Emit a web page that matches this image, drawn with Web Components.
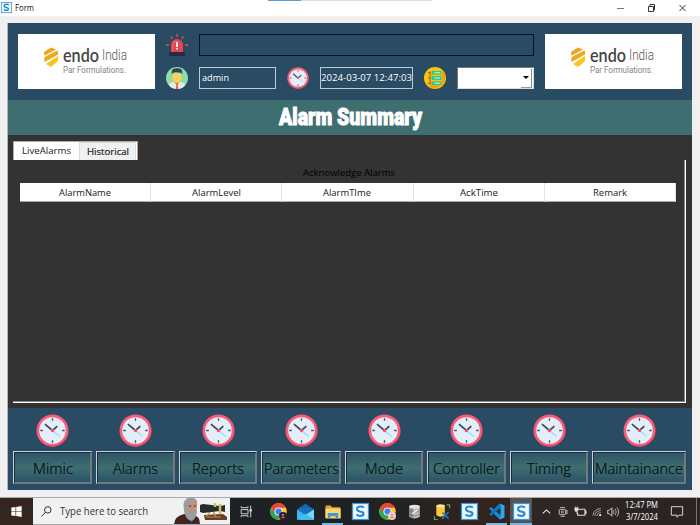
<!DOCTYPE html>
<html lang="en"><head><meta charset="utf-8"><title>Form</title>
<style>html,body{margin:0;width:700px;height:525px;overflow:hidden;background:#f0f0f0;font-family:"Open Sans","Noto Sans",sans-serif}</style></head>
<body><scada-window></scada-window>
<script>
const define=(name,html,setup)=>customElements.define(name,class extends HTMLElement{
  connectedCallback(){
    if(this.shadowRoot)return;
    this.attachShadow({mode:'open'});
    const t=document.createElement('template');
    t.innerHTML=typeof html==='function'?html(this):html;
    this.shadowRoot.append(t.content.cloneNode(true));
    if(setup)setup(this,this.shadowRoot);
  }
});

/* Text squeezed or stretched horizontally to the width in "w" */
define('fit-text','<style>:host{display:block;white-space:nowrap;flex:none}span{display:inline-block;transform-origin:0 50%}</style><span><slot></slot></span>',(el,root)=>{
  const w=+el.getAttribute('w'),s=root.querySelector('span');
  el.style.width=w+'px';
  s.style.transform=`scaleX(${w/s.getBoundingClientRect().width})`;
});

const art={
clock:`<circle cx="17" cy="17" r="16.500" fill="#ff5a77"/><path d="M17 33.500a16.500 16.500 0 0 0 16.400-18A17 17 0 0 1 3 26 16.500 16.500 0 0 0 17 33.500" fill="#e8465f"/><circle cx="17" cy="17" r="13.700" fill="#e4eef8"/><path d="M17 4.500v2.500M17 27v2.500M4.500 17H7M27 17h2.500" stroke="#35505f" stroke-width="1.300"/><path d="M17 17l7.500 6.300" stroke="#8fdcfb" stroke-width="1.200"/><path d="M17 17L9.200 10.500M17 17l5-4.500" stroke="#35505f" stroke-width="1.800"/><circle cx="17" cy="17" r="1.700" fill="#ff4d68"/>`,
siren:`<g transform="scale(1.545)"><path d="M5 18V11a6 6 0 0 1 12 0v7z" fill="#e14750"/><path d="M7 17v-6a4 4 0 0 1 4-4" stroke="#f36b6d" fill="none"/><rect x="3" y="18" width="16" height="4" rx="1.300" fill="#292941"/><path d="M11 0v3M4.500 2.500l2 2M17.500 2.500l-2 2M0 11h3M19 11h3" stroke="#ec4e54" stroke-width="1.300"/><path d="M11 8v5" stroke="#fff" stroke-width="1.700"/><circle cx="11" cy="14.700" r=".9" fill="#fff"/></g>`,
user:`<clipPath id="c"><circle cx="17" cy="17" r="17"/></clipPath><g clip-path="url(#c)"><path fill="#91dda8" d="M0 0h34v34H0z"/><path d="M4 34v-6q1-4 8-5h10q7 1 8 5v6z" fill="#e6e9ee"/><path d="M13 19h8v6l-4 3-4-3z" fill="#f4b541"/><path d="M10 10h14v6q0 6-7 8-7-2-7-8z" fill="#ffcf5c"/><path d="M9 12V6q1-4 7-4 8-1 9 4v6l-2-3-8-1-4 1z" fill="#2f4859"/><path d="M15 25h4l-1 3 1 6h-4l1-6z" fill="#f05b45"/></g>`,
list:`<circle cx="17" cy="17" r="17" fill="#ffc20c"/><path d="M28 4a17 17 0 0 1-20 27l4-6h16z" fill="#fa9c12"/><path d="M8 7h3v20H8z" fill="#c78a24"/><path d="M12 6h15v6H12zM12 14h15v6H12zM12 22h15v6H12z" fill="#34c98a"/><path d="M16 9h9M16 17h9M16 25h9" stroke="#d8f7df" stroke-width="1.500"/><path d="M6 9h4M6 17h4M6 25h4" stroke="#6e6d4a" stroke-width="1.700"/>`,
s:`<rect x="1" y="1" width="32" height="32" fill="#eef8ff" stroke="#3b94d7" stroke-width="2.500"/><path d="M24 9q-3-2-7-2-7 0-7 5 0 4 6 5 7 1 7 4 0 5-7 5-4 0-7-3" fill="none" stroke="#2588d4" stroke-width="4.200"/>`,
chrome:`<circle cx="17" cy="17" r="16.500" fill="#ffca28"/><path d="M2.700 8.800A16.500 16.500 0 0 1 31.500 9H17z" fill="#e9453a"/><path d="M2.700 8.800A16.500 16.500 0 0 0 16 33.500L24 21 17 24 10 20z" fill="#31a853"/><path d="M2.700 8.800L10 21 17 9h14.500A16.500 16.500 0 0 0 2.700 8.800" fill="#e9453a"/><circle cx="17" cy="17" r="8" fill="#fff"/><circle cx="17" cy="17" r="6.300" fill="#3b83ee"/>`,
mail:`<path d="M0 13L17 1l17 12v20H0z" fill="#1265ab"/><path d="M4 10h26v14H4z" fill="#1871bd"/><path d="M0 13l17 11 17-11v20H0z" fill="#35b8f5"/><path d="M34 13v20H4z" fill="#75d8ff"/><path d="M0 33l17-12 17 12z" fill="#45bdf0"/>`,
folder:`<path d="M1 5q0-2 2-2h9l3 4h16q2 0 2 2v22H1z" fill="#e7a72b"/><path d="M1 10h32v20H1z" fill="#ffd76b"/><path d="M6 19h22v13h-5v-6H11v6H6z" fill="#3a95db"/>`,
db:`<path d="M5 5v24q12 8 24 0V5z" fill="#b8bdc4"/><path d="M5 7v22q4 3 9 4V8z" fill="#858b92"/><ellipse cx="17" cy="6" rx="12" ry="4.500" fill="#e3e5e8"/><path d="M5 15q12 7 24 0M5 23q12 7 24 0" fill="none" stroke="#70767d" stroke-width="1.500"/><path d="M11 22l13-8" stroke="#edf0f4" stroke-width="3"/>`,
tools:`<path d="M5 3v21q9 6 18 0V3z" fill="#f8ca3b"/><ellipse cx="14" cy="4" rx="9" ry="3.500" fill="#ffe68a"/><path d="M27 2h6v7M8 33H1v-7" fill="none" stroke="#56ac4a" stroke-width="2.500"/><path d="M18 18l13 13M31 17L17 32" stroke="#2178be" stroke-width="3.500"/>`,
vscode:`<path d="M24 1l9 4v24l-9 4-17-16z" fill="#2ba7ee"/><path d="M25 9v16L14 17z" fill="#28231f"/><path d="M2 11l4-3 19 16v9z" fill="#128bd7"/><path d="M2 23l4 3 19-16V1z" fill="#0876bd"/>`,
view:`<path d="M3 3v4h18V3M3 32v-4h18v4M3 12h18v11H3zM28 2v30" fill="none" stroke="#ddd" stroke-width="2.400"/><path d="M25 11h6v6h-6z" fill="#ddd"/>`,
win:`<path d="M1 5l13-2v13H1zM16 3l17-3v16H16zM1 18h13v13L1 29zM16 18h17v16l-17-3z" fill="#fff"/>`,
search:`<circle cx="21" cy="12" r="10" fill="none" stroke="#292929" stroke-width="3"/><path d="M14 19L2 32" stroke="#292929" stroke-width="3"/>`,
up:`<path d="M3 24l14-13 14 13" fill="none" stroke="#eee" stroke-width="4"/>`,
cam:`<rect x="4" y="8" width="22" height="18" rx="4" fill="none" stroke="#ddd" stroke-width="3"/><circle cx="15" cy="17" r="3.500" fill="none" stroke="#ddd" stroke-width="2.500"/><path d="M7 1.500h17M9 32h14M26 13l5-2v12l-5-2" stroke="#ddd" stroke-width="2.500" fill="none"/>`,
battery:`<path d="M13 9h18v17H10V19M31 14h3v7h-3" fill="none" stroke="#ddd" stroke-width="3"/><path d="M2 5h10v6q-1 5-5 5-5 0-5-5zM4 1v5M10 1v5M8 15v6h4" fill="#ddd" stroke="#ddd" stroke-width="1.500"/>`,
wifi:`<path d="M3 29A27 27 0 0 1 30 5M9 30A21 21 0 0 1 30 12M16 31A14 14 0 0 1 30 19" fill="none" stroke="#bbb" stroke-width="2.800"/><path d="M23 31a8 8 0 0 1 8-7v7z" fill="#eee"/>`,
sound:`<path d="M2 12h5l7-7v24l-7-7H2z" fill="none" stroke="#ddd" stroke-width="2.500"/><path d="M18 12q4 5 0 10M23 8q7 9 0 18M28 4q10 13 0 26" fill="none" stroke="#ccc" stroke-width="2.300"/>`,
note:`<path d="M1 2h32v24H22l-5 6v-6H1z" fill="none" stroke="#ddd" stroke-width="2.700"/>`
};
define('ui-icon',el=>`<style>:host{display:block;flex:none;width:${el.getAttribute('size')}px;height:${el.getAttribute('size')}px}svg{display:block;width:100%;height:100%;overflow:visible}</style><svg viewBox="0 0 34 34">${art[el.getAttribute('name')]}${el.hasAttribute('badge')?`<circle cx="26" cy="26" r="8" fill="${el.getAttribute('badge')}"/><path d="M22 30q4-6 8 0z" fill="#e66"/><circle cx="26" cy="24" r="2" fill="#a9a"/>`:''}</svg>`);

define('title-bar',`<style>:host{display:flex;height:16px;background:#fff;align-items:center;font-size:8.700px;color:#111;box-sizing:border-box;padding:0 13px 1px 1px;gap:3px;line-height:12px}.sp{flex:1;align-self:start;display:flex}.sp i{margin-left:231px;width:33px;height:1px;background:#4f9edb}.sp b{width:131px;height:1px;background:#ddd}svg{display:block}</style>
<ui-icon name="s" size="11"></ui-icon><fit-text w="19">Form</fit-text><div class="sp"><i></i><b></b></div>
<svg width="70" height="10" viewBox="0 0 70 10" fill="none" stroke="#333"><path d="M0 5.500h7" stroke="#777"/><path d="M31.500 3.500h5v5h-5zM33 3V1.500h4.500V7H37"/><path d="M62.500 2l6 6M68.500 2l-6 6"/></svg>`);

define('brand-logo',`<style>:host{display:flex;background:#fff;box-sizing:border-box;padding:12px 0 0 26px;gap:4px;align-items:flex-start}svg{display:block;margin-top:1px}.t{display:block}.r{display:flex;gap:3px;height:19px}.a{font:600 19px/18px Lato,sans-serif;color:#444}.b{font:14px/19px "Roboto",sans-serif;font-weight:300;color:#555}.c{font:8.700px/10px "Roboto",sans-serif;color:#858383}</style>
<svg width="15" height="20" viewBox="0 0 15 20"><path d="M0 5L7 .5l5 2L1 9Q0 8 0 5" fill="#eea51e"/><path d="M0 13Q0 10 2 9l11-6q2 2 1 5L1 15z" fill="#f0a820"/><path d="M2 17l12-8q1 4-1 6l-6 5z" fill="#fbc51c"/><path d="M0 9.500L13 3M1 15.700l13-7.500" stroke="#fff" stroke-width="1.100"/></svg>
<div class="t"><div class="r"><fit-text class="a" w="36">endo</fit-text><fit-text class="b" w="25">India</fit-text></div><fit-text class="c" w="63">Par Formulations.</fit-text></div>`);

define('value-box',`<style>:host{display:flex;box-sizing:border-box;border:1px solid #bdcad3;height:22px;align-items:center;color:#fff;font-size:9.700px;line-height:20px;overflow:hidden}:host([dark]){border-color:#07131c}::slotted(*){margin-left:2px}</style><slot></slot>`);
define('combo-box',`<style>:host{display:flex;justify-content:flex-end;align-items:center;box-sizing:border-box;height:22px;background:#fff;border:1px solid #ddd;border-top-color:#777;border-left-color:#777;padding:1px}i{width:10px;height:18px;border-right:1px solid #888;border-bottom:1px solid #999;display:flex;align-items:center;justify-content:center;box-sizing:content-box}b{border:3px solid transparent;border-top:3px solid #000;border-bottom:0}</style><i><b></b></i>`);

define('status-header',`<style>:host{display:grid;grid-template-columns:137px 22px 77px 22px 93px 22px 77px 137px;grid-template-rows:22px 22px;gap:11px;height:77px;box-sizing:border-box;padding:11px 10px;background:#294b63}brand-logo{grid-row:1/3}brand-logo.r{grid-column:8}.wide{grid-column:3/8}.u{grid-column:2}</style>
<brand-logo></brand-logo><ui-icon name="siren" size="22"></ui-icon><value-box class="wide" dark></value-box><ui-icon class="u" name="user" size="22"></ui-icon><value-box><fit-text w="27">admin</fit-text></value-box><ui-icon name="clock" size="22"></ui-icon><value-box><fit-text w="91" style="margin-left:0">2024-03-07 12:47:03</fit-text></value-box><ui-icon name="list" size="22"></ui-icon><combo-box></combo-box><brand-logo class="r"></brand-logo>`);

define('page-title',`<style>:host{display:flex;height:35px;background:#3e6e70;justify-content:center;color:#fff;font:900 23.500px/35px Roboto,sans-serif;-webkit-text-stroke:1px #fff}</style><fit-text w="143"><slot></slot></fit-text>`);

define('alarm-tabs',`<style>:host{display:block;height:273px;box-sizing:border-box;background:#333;padding:6px 6px 5px 5px}
.tabs{display:flex;height:19px;width:125px;box-sizing:border-box;background:#fff;border:1px solid #aaa;border-bottom:0;font-size:9.700px;line-height:18px;color:#1a1a1a}.tabs div{display:flex;justify-content:center}.on{width:65px}.off{flex:1;background:#f0f0f0;border:1px solid #ddd;border-width:1px 1px 0 1px;margin-right:1px}
.pane{height:243px;box-sizing:border-box;border-right:1px solid #fff;border-bottom:1px solid #fff;box-shadow:inset -1px -1px #888;padding:6px 9px 0 7px}
.cap{display:flex;justify-content:center;height:17px;line-height:14px;color:#000;font-size:9.700px;margin-left:1px}
.head{display:grid;grid-template-columns:repeat(5,1fr);height:19px;background:#fff;border-bottom:1px solid #aaa;box-sizing:border-box;color:#1a1a1a;font-size:9.700px;line-height:19px}.head div{display:flex;justify-content:center;border-right:1px solid #e1e1e1}</style>
<div class="tabs"><div class="on"><fit-text w="49">LiveAlarms</fit-text></div><div class="off"><fit-text w="42" style="-webkit-text-stroke:.2px #222">Historical</fit-text></div></div>
<div class="pane"><div class="cap"><fit-text w="92">Acknowledge Alarms</fit-text></div><div class="head"><div><fit-text w="52">AlarmName</fit-text></div><div><fit-text w="49">AlarmLevel</fit-text></div><div><fit-text w="48">AlarmTIme</fit-text></div><div><fit-text w="38">AckTime</fit-text></div><div><fit-text w="34">Remark</fit-text></div></div></div>`);

define('nav-item',el=>`<style>:host{display:flex;flex-direction:column;align-items:center;gap:4px}button{display:flex;align-items:center;justify-content:center;width:100%;height:33px;box-sizing:border-box;border:1px solid #cbd2d5;border-right-color:#777;border-bottom-color:#777;box-shadow:inset 1px 1px #17303d,inset -1px -1px #6d7b82;background:linear-gradient(#2d5367,#3e6e70 50%,#2b5067);padding:0;font:300 14.800px/31px "Open Sans",sans-serif;color:#050b0c;-webkit-text-stroke:.2px #050b0c}fit-text{position:relative;top:1px}</style><ui-icon name="clock" size="33"></ui-icon><button><fit-text w="${el.getAttribute('text-width')}">${el.getAttribute('label')}</fit-text></button>`);
define('nav-bar',`<style>:host{display:grid;grid-template-columns:79px 79px 78px 80px 78px 79px 78px 94px;column-gap:4px;background:#294b63;height:82px;box-sizing:border-box;padding:6px 5px}</style>`+
[['Mimic',40],['Alarms',45],['Reports',52],['Parameters',75],['Mode',38],['Controller',67],['Timing',44],['Maintainance',88]].map(([t,w])=>`<nav-item label="${t}" text-width="${w}"></nav-item>`).join(''));

define('task-bar',`<style>:host{display:flex;height:27px;background:linear-gradient(90deg,#1e2224 0 52%,#34231d 70%,#2d2625 78%,#2b2322);color:#fff}.slot{display:flex;flex:none;align-items:center;justify-content:center;box-sizing:border-box}.start{width:33px;background:#35251f}.find{width:197px;background:#f1f1f1;color:#333;font-size:10.500px;line-height:26px;display:flex;align-items:center;padding-left:8px;gap:8px;box-sizing:border-box;border-bottom:1px solid #aaa}.find svg{margin-left:18px;align-self:end}.run{border-bottom:2px solid #72b9ee;padding-top:2px}.act{background:#565352}.clock{flex-direction:column;font-size:8.300px;line-height:12px;padding:0 16px 1px 0}.end{border-right:1px solid #777}</style>
<div class="slot start"><ui-icon name="win" size="11"></ui-icon></div>
<div class="find"><ui-icon name="search" size="11"></ui-icon><fit-text w="88">Type here to search</fit-text><svg width="54" height="27" viewBox="0 0 54 27"><path d="M0 27q1-8 10-10h8q8 2 8 10z" fill="#44241e"/><path d="M15 22l2 5 3-5z" fill="#233f8b"/><path d="M11 6q1-5 7-5 6 1 5 7l-1 9-4 6-6-4-2-6z" fill="#c68f7c"/><path d="M10 13Q8 3 14 1q8-2 9 4l-5-1-4 3v6l3 1 6-1q0 8-5 11-7-1-8-11" fill="#9a9d9d"/><path d="M15 9h2m3 0h2" stroke="#333"/><path d="M30 18l19-1 4 3v3H31z" fill="#6b3b27"/><path d="M38 12l-6 8M38 12l4 8M33 20h14" stroke="#b99537" stroke-width="1.200"/><path d="M26 8l3-1 17 2 5-1v7l-5-1-17 2-3-1z" fill="#252d2c"/><path d="M41 6v4M46 7v10" stroke="#d3bb62" stroke-width="2.500"/></svg></div>`+
[['view',32,13],['chrome',32,17,'','#34202b'],['mail',23,17],['folder',31,16,'run'],['s',24,17],['chrome',30,17,'','#efcaca'],['db',25,15],['tools',30,16],['s',25,17],['vscode',29,17,'run'],['s',22,17,'run act']].map(([n,w,s,c='',b])=>`<div class="slot ${c}" style="width:${n==='folder'?21:w}px;${n==='folder'?'margin:0 5px':n==='vscode'?'width:21px;margin:0 3px 0 4px':''}"><ui-icon name="${n}" size="${s}" ${b?`badge="${b}"`:''}></ui-icon></div>`).join('')+
[['up',28,9],['cam',6,10],['battery',27,12],['wifi',7,10],['sound',25,12]].map(([n,w,s])=>`<div class="slot" style="width:${w}px"><ui-icon name="${n}" size="${s}"></ui-icon></div>`).join('')+
`<div class="slot clock" style="width:49px"><fit-text w="33">12:47 PM</fit-text><fit-text w="32">3/7/2024</fit-text></div><div class="slot" style="width:6px"><ui-icon name="note" size="12"></ui-icon></div><div class="slot end" style="flex:1;margin-right:3px"></div>`);

define('scada-window',`<style>:host{display:flex;flex-direction:column;width:700px;height:525px;background:#f0f0f0}main{margin:7px 8px 7px;height:467px;box-shadow:-1px 0 #b5b5b5}task-bar{margin-top:auto;box-shadow:0 -1px #aaa}</style>
<title-bar></title-bar><main><status-header></status-header><page-title>Alarm Summary</page-title><alarm-tabs></alarm-tabs><nav-bar></nav-bar></main><task-bar></task-bar>`);
</script></body></html>
